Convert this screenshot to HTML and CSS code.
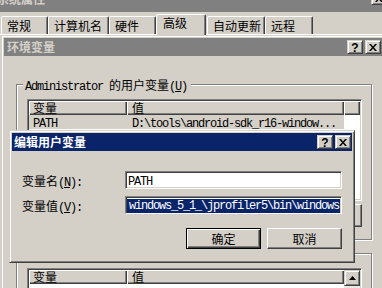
FILE: index.html
```html
<!DOCTYPE html>
<html lang="zh-CN">
<head>
<meta charset="utf-8">
<title>环境变量</title>
<link rel="stylesheet" href="styles.css">
</head>
<body>
<div class="desk">

  <section class="win sys">
    <header class="cap cap-inactive">
      <span class="cap-text">系统属性</span>
      <span class="cap-btns">
        <span class="cbtn"><svg class="ix" width="8" height="7" viewBox="0 0 8 7"><path d="M0 0h2l2 2.5L6 0h2L5 3.5 8 7H6L4 4.5 2 7H0l3-3.5z"/></svg></span>
      </span>
    </header>
    <nav class="tabs">
      <span class="tab tab-w1">常规</span>
      <span class="tab tab-w2">计算机名</span>
      <span class="tab tab-w3">硬件</span>
      <span class="tab tab-sel">高级</span>
      <span class="tab tab-w5">自动更新</span>
      <span class="tab tab-w6">远程</span>
    </nav>
    <div class="tabpanel"></div>
  </section>

  <section class="win env">
    <header class="cap cap-inactive">
      <span class="cap-text">环境变量</span>
      <span class="cap-btns">
        <span class="cbtn"><span class="iq">?</span></span>
        <span class="cbtn"><svg class="ix" width="8" height="7" viewBox="0 0 8 7"><path d="M0 0h2l2 2.5L6 0h2L5 3.5 8 7H6L4 4.5 2 7H0l3-3.5z"/></svg></span>
      </span>
    </header>
    <div class="env-body">
      <div class="group g1">
        <span class="glabel"><span class="m">Administrator </span>的用户变量<span class="m">(<u>U</u>)</span></span>
        <div class="list l1">
          <div class="lhead">
            <span class="hcell c1">变量</span><span class="hcell c2">值</span><span class="hcell c3"></span>
          </div>
          <div class="lrow">
            <span class="cell c1"><span class="m">PATH</span></span><span class="cell c2"><span class="m">D:\tools\android-sdk_r16-window...</span></span>
          </div>
        </div>
        <div class="gbtns">
          <span class="btn"></span>
          <span class="btn"></span>
          <span class="btn"></span>
        </div>
      </div>
      <div class="group g2">
        <span class="glabel">系统变量<span class="m">(<u>S</u>)</span></span>
        <div class="list l2">
          <div class="lmain">
            <div class="lhead">
              <span class="hcell c1">变量</span><span class="hcell c2">值</span>
            </div>
          </div>
          <div class="vscroll">
            <span class="sbtn"><svg width="7" height="4" viewBox="0 0 7 4"><path d="M3.5 0L7 4H0z"/></svg></span>
            <span class="strack"></span>
          </div>
        </div>
      </div>
    </div>
  </section>

  <section class="win edit">
    <header class="cap cap-active">
      <span class="cap-text">编辑用户变量</span>
      <span class="cap-btns">
        <span class="cbtn"><span class="iq">?</span></span>
        <span class="cbtn"><svg class="ix" width="8" height="7" viewBox="0 0 8 7"><path d="M0 0h2l2 2.5L6 0h2L5 3.5 8 7H6L4 4.5 2 7H0l3-3.5z"/></svg></span>
      </span>
    </header>
    <div class="edit-body">
      <div class="frow">
        <span class="flabel">变量名<span class="m">(<u>N</u>):</span></span>
        <span class="field"><span class="m">PATH</span></span>
      </div>
      <div class="frow">
        <span class="flabel">变量值<span class="m">(<u>V</u>):</span></span>
        <span class="field field-sel"><span class="m selected">windows_5_1_\jprofiler5\bin\windows</span></span>
      </div>
      <div class="brow">
        <span class="btn btn-default">确定</span>
        <span class="btn">取消</span>
      </div>
    </div>
  </section>

</div>
</body>
</html>
```

FILE: styles.css
```css
* { box-sizing: border-box; margin: 0; padding: 0; }

html, body {
  width: 382px;
  height: 288px;
  overflow: hidden;
}

body {
  font-family: "Noto Sans CJK SC", "Noto Sans CJK JP", sans-serif;
  font-size: 12px;
  line-height: 12px;
  color: #000;
  background: #d4d0c8;
}

.m {
  font-family: "Liberation Mono", "DejaVu Sans Mono", monospace;
  letter-spacing: -1.2px;
}

u { text-decoration: underline; }

.desk {
  position: relative;
  width: 382px;
  height: 288px;
  overflow: hidden;
}

/* windows */
.win {
  position: absolute;
  display: flex;
  flex-direction: column;
  background: #d4d0c8;
  border: 1px solid;
  border-color: #d4d0c8 #404040 #404040 #d4d0c8;
  box-shadow: inset 1px 1px #fff, inset -1px -1px #808080;
  padding: 2px;
}

.sys { left: -9px; top: -15px; width: 400px; height: 320px; }
.env { left: 1px; top: 35px; width: 384px; height: 275px; }
.edit { left: 9px; top: 130px; width: 346px; height: 133px; }

/* captions */
.cap {
  flex: none;
  display: flex;
  align-items: center;
  height: 18px;
  padding: 0 1px 0 3px;
}
.cap-inactive { background: #808080; color: #d4d0c8; }
.cap-active { background: #0a246a; color: #fff; }
.cap-text { font-weight: bold; white-space: nowrap; }
.edit .cap { padding-left: 2px; }

.sys .cap { height: 24px; align-items: flex-start; }
.sys .cap-text { margin-top: 5px; }
.sys .cap-btns { margin-top: 3px; }

.cap-btns { margin-left: auto; display: flex; gap: 2px; }

.cbtn {
  width: 16px;
  height: 14px;
  display: flex;
  align-items: center;
  justify-content: center;
  background: #d4d0c8;
  border: 1px solid;
  border-color: #d4d0c8 #404040 #404040 #d4d0c8;
  box-shadow: inset 1px 1px #fff, inset -1px -1px #808080;
  color: #000;
}
.ix { display: block; fill: #000; }
.iq {
  font-family: "Liberation Sans", "DejaVu Sans", sans-serif;
  font-weight: bold;
  font-size: 12px;
  line-height: 12px;
  margin-top: 1px;
}

/* tabs */
.tabs {
  flex: none;
  display: flex;
  align-items: flex-end;
  height: 22px;
  padding-left: 7px;
}
.tab {
  height: 18px;
  border: 1px solid;
  border-bottom: 0;
  border-color: #fff #404040 transparent #fff;
  border-radius: 2px 2px 0 0;
  box-shadow: inset -1px 0 #808080;
  padding: 3px 0 0 5px;
  white-space: nowrap;
  background: #d4d0c8;
}
.tab-w1 { width: 47px; }
.tab-w2 { width: 61px; }
.tab-w3 { width: 47px; }
.tab-sel {
  width: 50px;
  height: 21px;
  margin-bottom: -1px;
  padding: 2px 0 0 6px;
  position: relative;
  z-index: 1;
}
.tab-w5 { width: 58px; margin-left: 1px; }
.tab-w6 { width: 48px; }

.tabpanel {
  flex: 1;
  border-top: 1px solid #fff;
  border-left: 1px solid #fff;
}

/* env dialog body */
.env-body {
  display: flex;
  flex-direction: column;
  align-items: flex-start;
  padding: 28px 0 0 12px;
}

.group {
  width: 356px;
  display: flex;
  flex-direction: column;
  align-items: flex-start;
  border: 1px solid #808080;
  box-shadow: inset 1px 1px #fff, 1px 1px #fff;
  padding: 0 9px 12px 10px;
}
.g2 { margin-top: 13px; height: 120px; }

.glabel {
  height: 12px;
  margin: -6px 0 0 -4px;
  padding: 0 4px 0 2px;
  background: #d4d0c8;
  white-space: nowrap;
}

.list {
  margin-top: 8px;
  width: 335px;
  background: #fff;
  border: 1px solid;
  border-color: #808080 #fff #fff #808080;
  box-shadow: inset 1px 1px #404040, inset -1px -1px #d4d0c8;
  padding: 1px;
}
.l1 { height: 102px; }
.l2 { height: 100px; display: flex; }

.lmain { flex: 1; }

.lhead { display: flex; height: 14px; }
.hcell {
  height: 14px;
  background: #d4d0c8;
  box-shadow: inset 1px 1px #fff, inset -1px -1px #404040, inset -2px -2px #808080;
  padding: 1px 0 0 4px;
  white-space: nowrap;
}
.c1 { width: 98px; }
.c2 { width: 217px; padding-left: 5px; }
.c3 { flex: 1; }

.lrow { display: flex; height: 14px; }
.cell {
  height: 14px;
  background: #d4d0c8;
  padding: 1px 0 0 4px;
  white-space: nowrap;
}
.cell.c2 { padding-left: 5px; }

.vscroll { width: 16px; display: flex; flex-direction: column; }
.sbtn {
  height: 16px;
  display: flex;
  align-items: center;
  justify-content: center;
  background: #d4d0c8;
  border: 1px solid;
  border-color: #d4d0c8 #404040 #404040 #d4d0c8;
  box-shadow: inset 1px 1px #fff, inset -1px -1px #808080;
}
.sbtn svg { display: block; fill: #000; }
.strack { flex: 1; background: #ebe9e5; }

.gbtns {
  align-self: stretch;
  display: flex;
  justify-content: flex-end;
  gap: 6px;
  margin-top: 3px;
}
.gbtns .btn { height: 23px; }

/* buttons */
.btn {
  width: 75px;
  height: 21px;
  display: flex;
  align-items: center;
  justify-content: center;
  white-space: nowrap;
  background: #d4d0c8;
  border: 1px solid;
  border-color: #fff #404040 #404040 #fff;
  box-shadow: inset -1px -1px #808080;
}
.btn-default {
  border-color: #000;
  box-shadow: inset 1px 1px #fff, inset -1px -1px #404040, inset -2px -2px #808080;
}

/* edit dialog body */
.edit-body {
  display: flex;
  flex-direction: column;
  padding: 20px 10px 0 10px;
}
.frow { display: flex; align-items: center; height: 18px; }
.frow + .frow { margin-top: 7px; }
.flabel { width: 103px; padding-top: 3px; white-space: nowrap; }

.field {
  width: 217px;
  height: 18px;
  background: #fff;
  border: 1px solid;
  border-color: #808080 #fff #fff #808080;
  box-shadow: inset 1px 1px #404040, inset -1px -1px #d4d0c8;
  padding: 2px 0 0 2px;
  overflow: hidden;
  white-space: nowrap;
}
.field-sel { padding: 1px 0 0 1px; }
.selected {
  display: inline-block;
  height: 14px;
  padding: 1px 1px 0 2px;
  background: #0a246a;
  color: #fff;
}

.brow {
  display: flex;
  justify-content: flex-end;
  gap: 6px;
  margin-top: 14px;
}
```
